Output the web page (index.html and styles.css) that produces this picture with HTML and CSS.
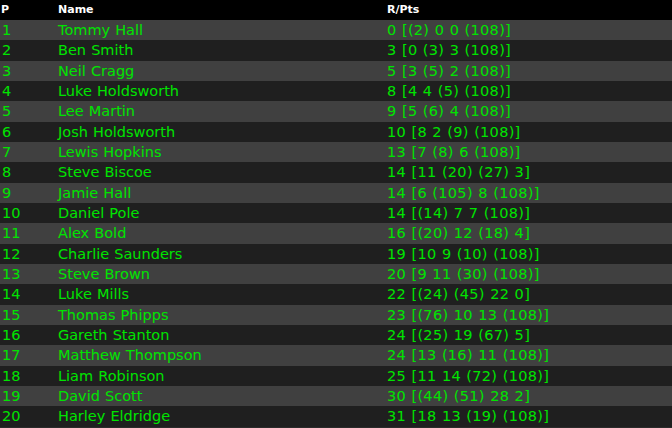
FILE: index.html
```html
<!DOCTYPE html>
<html>
<head>
<meta charset="utf-8">
<link rel="stylesheet" href="styles.css">
</head>
<body>
<div class="board">
  <div class="row head"><span>P</span><span>Name</span><span>R/Pts</span></div>
  <div class="row"><span>1</span><span>Tommy Hall</span><span class="pts">0 [(2) 0 0 (108)]</span></div>
  <div class="row"><span>2</span><span>Ben Smith</span><span class="pts">3 [0 (3) 3 (108)]</span></div>
  <div class="row"><span>3</span><span>Neil Cragg</span><span class="pts">5 [3 (5) 2 (108)]</span></div>
  <div class="row"><span>4</span><span>Luke Holdsworth</span><span class="pts">8 [4 4 (5) (108)]</span></div>
  <div class="row"><span>5</span><span>Lee Martin</span><span class="pts">9 [5 (6) 4 (108)]</span></div>
  <div class="row"><span>6</span><span>Josh Holdsworth</span><span class="pts">10 [8 2 (9) (108)]</span></div>
  <div class="row"><span>7</span><span>Lewis Hopkins</span><span class="pts">13 [7 (8) 6 (108)]</span></div>
  <div class="row"><span>8</span><span>Steve Biscoe</span><span class="pts">14 [11 (20) (27) 3]</span></div>
  <div class="row"><span>9</span><span>Jamie Hall</span><span class="pts">14 [6 (105) 8 (108)]</span></div>
  <div class="row"><span>10</span><span>Daniel Pole</span><span class="pts">14 [(14) 7 7 (108)]</span></div>
  <div class="row"><span>11</span><span>Alex Bold</span><span class="pts">16 [(20) 12 (18) 4]</span></div>
  <div class="row"><span>12</span><span>Charlie Saunders</span><span class="pts">19 [10 9 (10) (108)]</span></div>
  <div class="row"><span>13</span><span>Steve Brown</span><span class="pts">20 [9 11 (30) (108)]</span></div>
  <div class="row"><span>14</span><span>Luke Mills</span><span class="pts">22 [(24) (45) 22 0]</span></div>
  <div class="row"><span>15</span><span>Thomas Phipps</span><span class="pts">23 [(76) 10 13 (108)]</span></div>
  <div class="row"><span>16</span><span>Gareth Stanton</span><span class="pts">24 [(25) 19 (67) 5]</span></div>
  <div class="row"><span>17</span><span>Matthew Thompson</span><span class="pts">24 [13 (16) 11 (108)]</span></div>
  <div class="row"><span>18</span><span>Liam Robinson</span><span class="pts">25 [11 14 (72) (108)]</span></div>
  <div class="row"><span>19</span><span>David Scott</span><span class="pts">30 [(44) (51) 28 2]</span></div>
  <div class="row"><span>20</span><span>Harley Eldridge</span><span class="pts">31 [18 13 (19) (108)]</span></div>
</div>
</body>
</html>
```
FILE: styles.css
```css
html, body {
  margin: 0;
  padding: 0;
  background: #2b2b2b;
  width: 672px;
  height: 428px;
  overflow: hidden;
}
.board {
  display: grid;
  grid-template-rows: 20px;
  grid-auto-rows: 20.333px;
  font-family: "DejaVu Sans", Verdana, sans-serif;
  font-size: 14.5px;
  color: #00e400;
}
.row {
  display: grid;
  grid-template-columns: 56px 329px 1fr;
  align-items: center;
  padding-left: 2px;
  white-space: nowrap;
  line-height: 20px;
  word-spacing: 0.5px;
}
.pts {
  letter-spacing: 0.3px;
}
.row:nth-child(even) { background: #404040; }
.row:nth-child(odd) { background: #1f1f1f; }
.row.head {
  background: #000;
  color: #fff;
  font-family: "DejaVu Sans", sans-serif;
  font-weight: bold;
  font-size: 11px;
  line-height: 20px;
  padding-left: 1px;
  word-spacing: 0;
  grid-template-columns: 57px 329px 1fr;
}
```
